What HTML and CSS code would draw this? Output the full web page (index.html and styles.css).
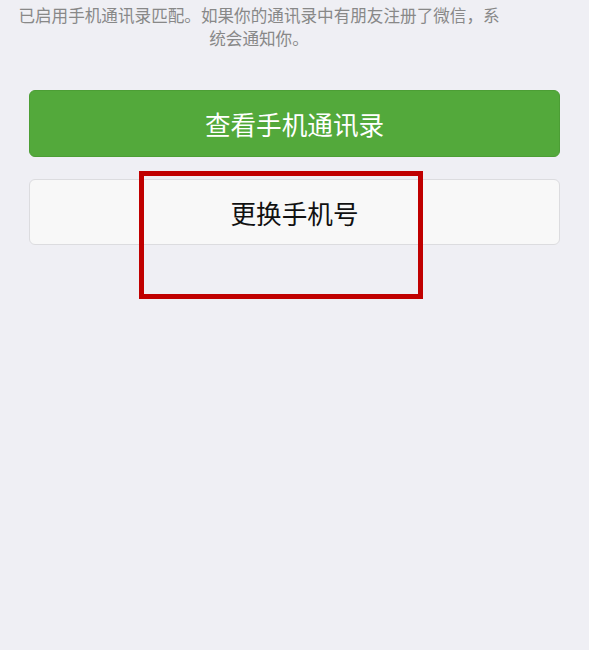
FILE: index.html
```html
<!DOCTYPE html>
<html lang="zh-CN">
<head>
    <meta charset="UTF-8">
    <meta name="viewport" content="width=device-width, initial-scale=1.0">
    <title>手机通讯录</title>
    <link rel="stylesheet" href="styles.css">
</head>
<body>
    <div class="page">
        <p class="notice">已启用手机通讯录匹配。如果你的通讯录中有朋友注册了微信，系统会通知你。</p>
        <div class="actions">
            <button class="btn btn-primary">查看手机通讯录</button>
            <button class="btn btn-default">更换手机号</button>
        </div>
        <div class="highlight"></div>
    </div>
</body>
</html>
```

FILE: styles.css
```css
html, body {
    margin: 0;
    padding: 0;
    background-color: #efeff4;
    font-family: "Noto Sans CJK SC", "Noto Sans", sans-serif;
}
.page {
    position: relative;
    height: 650px;
    overflow: hidden;
}
.notice {
    width: 490px;
    margin: 0 0 0 14px;
    padding-top: 4px;
    font-size: 16.6px;
    line-height: 23px;
    color: #888;
    text-align: center;
}
.actions {
    display: flex;
    flex-direction: column;
    gap: 22px;
    padding: 40px 29px 0 29px;
}
.btn {
    display: block;
    width: 100%;
    height: 67px;
    border-radius: 6px;
    font-family: inherit;
    font-size: 25.6px;
    padding: 0;
    cursor: pointer;
}
.btn-primary {
    background-color: #53a93b;
    border: 1px solid #4c9e35;
    color: #fff;
}
.btn-default {
    height: 66px;
    background-color: #f8f8f8;
    border: 1px solid #dcdcdf;
    color: #111;
}
.highlight {
    position: absolute;
    left: 139px;
    top: 171px;
    width: 274px;
    height: 118px;
    border: 5px solid #c00000;
}
```
